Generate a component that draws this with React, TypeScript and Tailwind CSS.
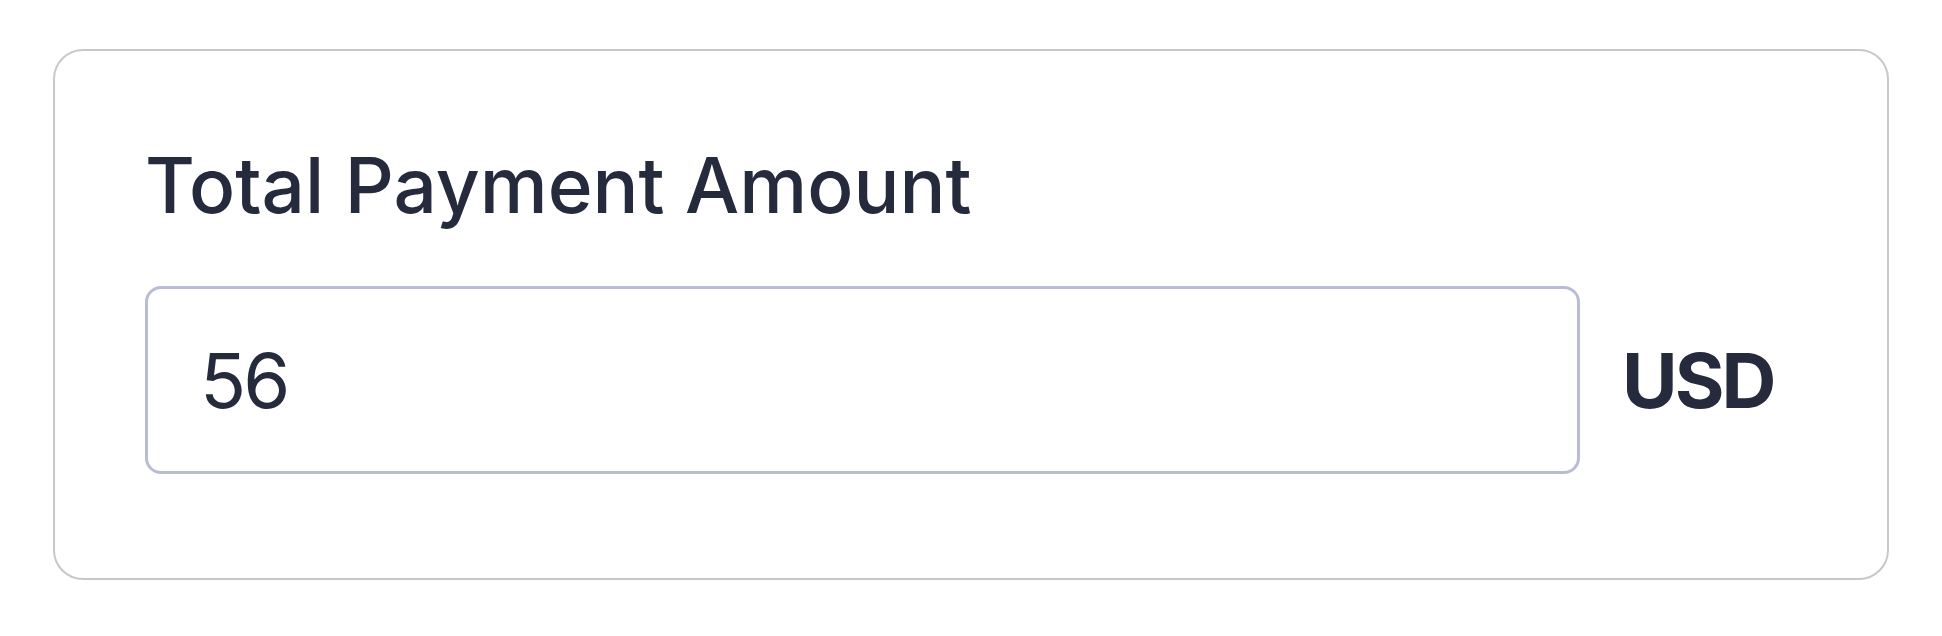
export default function App() {
  return (
    <div className="min-h-screen bg-white px-[53px] pt-[49px] font-['Inter',sans-serif]">
      <div className="rounded-[30px] border-2 border-[#c8c8c8] bg-white pb-[104px] pl-[90px] pr-[90px] pt-[89px]">
        <label className="block text-[76.5px] font-medium leading-[1.2] text-[#252b3d]">
          Total Payment Amount
        </label>
        <div className="mt-[54px] flex items-center">
          <div className="flex h-[188px] w-[1435px] items-center rounded-[16px] border-[3px] border-[#b9bcd6] bg-white pl-[52px]">
            <input
              type="text"
              defaultValue="56"
              className="w-full bg-transparent text-[76px] tracking-[-3px] text-[#252b3d] outline-none"
            />
          </div>
          <span className="ml-[42px] text-[76px] font-bold tracking-[-3px] text-[#252b3d]">USD</span>
        </div>
      </div>
    </div>
  );
}
